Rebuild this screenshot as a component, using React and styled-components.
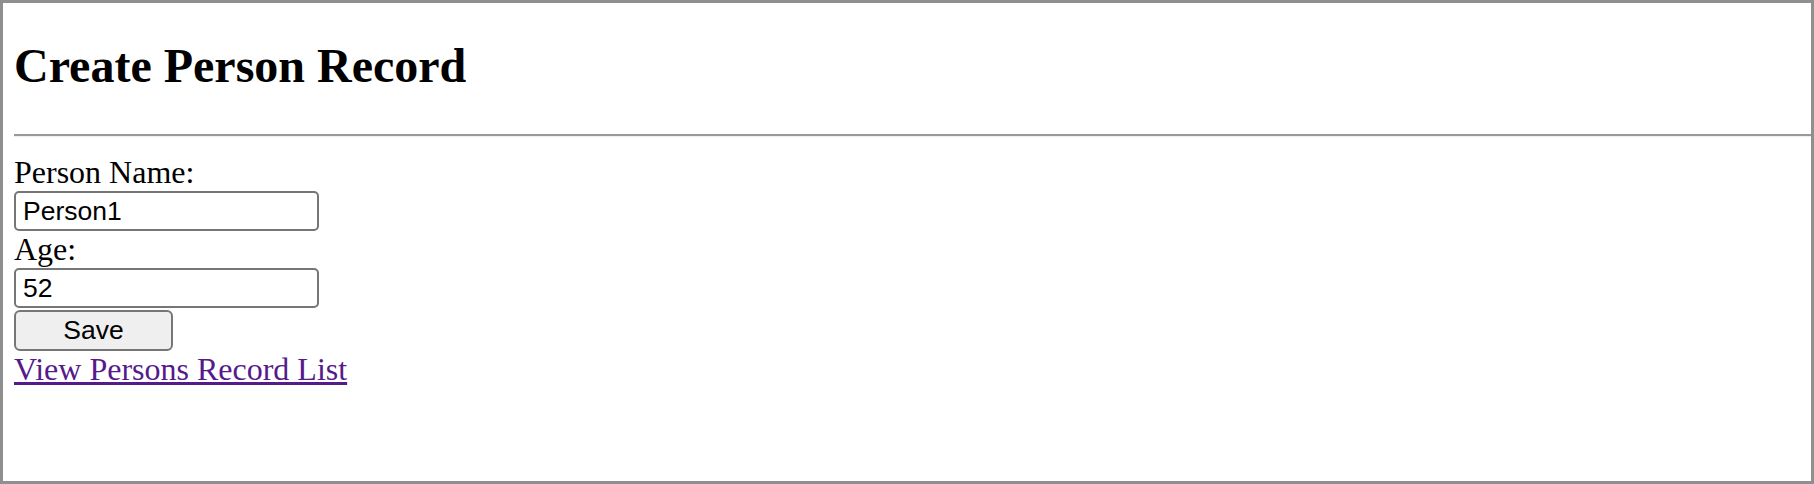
import React from "react";
import styled, { createGlobalStyle } from "styled-components";

const GlobalStyle = createGlobalStyle`
  html, body {
    margin: 0;
    padding: 0;
    background: #ffffff;
  }
`;

const Frame = styled.div`
  box-sizing: border-box;
  width: 1814px;
  height: 484px;
  border: 3px solid #8f8f8f;
  padding: 0 0 0 11px;
  overflow: hidden;
  background: #ffffff;
  font-family: "Liberation Serif", "Times New Roman", serif;
  color: #000;
`;

const Title = styled.h2`
  margin: 35px 0 0;
  font-size: 48px;
  line-height: 55px;
  font-weight: bold;
  white-space: nowrap;
`;

const Rule = styled.hr`
  margin: 41px 0 17px;
  height: 0;
  border: none;
  border-top: 2px solid #999999;
  border-bottom: 1px solid #eeeeee;
`;

const Form = styled.form`
  display: flex;
  flex-direction: column;
  align-items: flex-start;
`;

const Label = styled.label`
  display: block;
  font-size: 32px;
  line-height: 37px;
`;

const TextInput = styled.input`
  box-sizing: border-box;
  width: 305px;
  height: 40px;
  margin: 0;
  padding: 0 6px 0 7px;
  border: 2px solid #767676;
  border-radius: 5px;
  background: #fff;
  font-family: "Liberation Sans", Arial, sans-serif;
  font-size: 26.5px;
  color: #000;
  outline: none;
`;

const SaveButton = styled.button`
  box-sizing: border-box;
  width: 159px;
  height: 41px;
  margin: 2px 0 0;
  padding: 0;
  border: 2px solid #767676;
  border-radius: 6px;
  background: #efefef;
  font-family: "Liberation Sans", Arial, sans-serif;
  font-size: 26.5px;
  color: #000;
  cursor: pointer;
`;

const ListLink = styled.a`
  display: block;
  font-size: 32px;
  line-height: 37px;
  color: #551a8b;
  text-decoration: underline;
`;

export default function App() {
  return (
    <>
      <GlobalStyle />
      <Frame>
        <Title>Create Person Record</Title>
        <Rule />
        <Form onSubmit={(e) => e.preventDefault()}>
          <Label htmlFor="name">Person Name:</Label>
          <TextInput id="name" type="text" defaultValue="Person1" />
          <Label htmlFor="age">Age:</Label>
          <TextInput id="age" type="text" defaultValue="52" />
          <SaveButton type="submit">Save</SaveButton>
          <ListLink href="#list">View Persons Record List</ListLink>
        </Form>
      </Frame>
    </>
  );
}
